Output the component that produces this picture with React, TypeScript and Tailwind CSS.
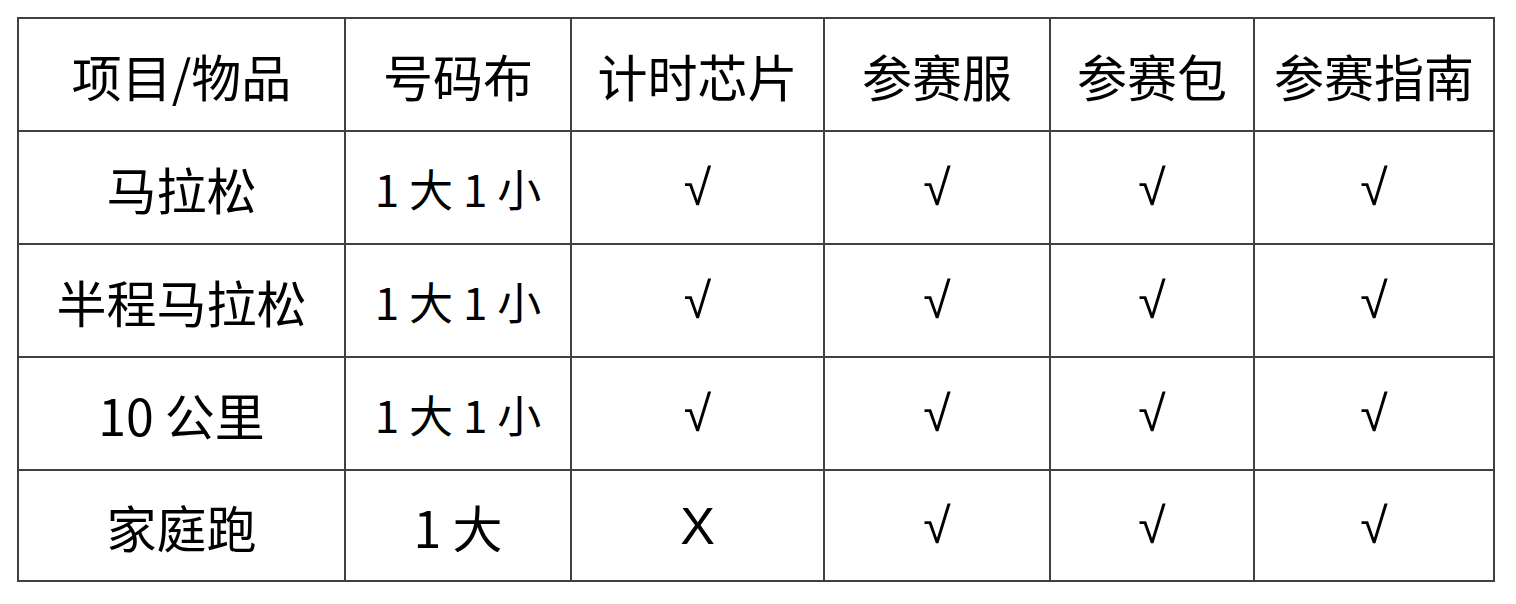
import React from "react";

const header = ["项目/物品", "号码布", "计时芯片", "参赛服", "参赛包", "参赛指南"];
const rows: { name: string; bib: string; bibSmall: boolean; chip: string }[] = [
  { name: "马拉松", bib: "1 大 1 小", bibSmall: true, chip: "√" },
  { name: "半程马拉松", bib: "1 大 1 小", bibSmall: true, chip: "√" },
  { name: "10 公里", bib: "1 大 1 小", bibSmall: true, chip: "√" },
  { name: "家庭跑", bib: "1 大", bibSmall: false, chip: "X" },
];

function Check() {
  return (
    <div className="bg-white flex items-center justify-center text-[50px] leading-none font-['Liberation_Sans',sans-serif]">
      √
    </div>
  );
}

export default function App() {
  return (
    <div
      className="w-[1516px] h-[604px] bg-white pt-[17px] pl-[17px]"
      style={{ fontFamily: '"Noto Sans CJK SC", "Noto Sans", sans-serif' }}
    >
      <div className="inline-grid grid-cols-[325px_224px_251px_224px_202px_238px] grid-rows-[111px_111px_111px_111px_109px] gap-[2px] p-[2px] bg-[#404040] text-black">
        {header.map((h) => (
          <div key={h} className="bg-white flex items-center justify-center text-[50px] leading-none">
            {h}
          </div>
        ))}
        {rows.map((r) => (
          <React.Fragment key={r.name}>
            <div className="bg-white flex items-center justify-center text-[50px] leading-none">{r.name}</div>
            <div
              className={
                r.bibSmall
                  ? "bg-white flex items-center justify-center text-[44px] leading-none"
                  : "bg-white flex items-center justify-center text-[50px] leading-none"
              }
            >
              {r.bib}
            </div>
            {r.chip === "X" ? (
              <div className="bg-white flex items-center justify-center text-[52px] leading-none font-['Liberation_Sans',sans-serif]">
                X
              </div>
            ) : (
              <Check />
            )}
            <Check />
            <Check />
            <Check />
          </React.Fragment>
        ))}
      </div>
    </div>
  );
}
